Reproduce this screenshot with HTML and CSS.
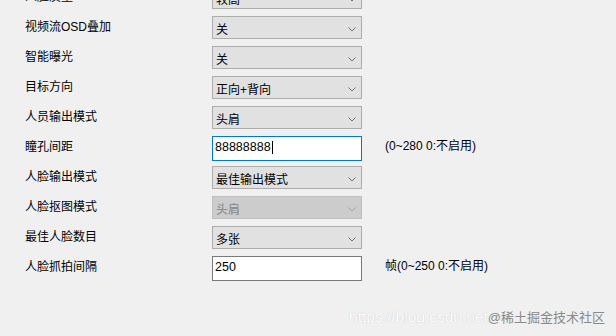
FILE: index.html
```html
<!DOCTYPE html>
<html lang="zh-CN">
<head>
  <meta charset="UTF-8">
  <title>人脸参数设置</title>
  <link rel="stylesheet" href="styles.css">
</head>
<body>

  <!-- Parameter form -->
  <div class="form">
    <div class="row">
      <span class="label">人脸质量</span>
      <div class="select"><span>较高</span><svg class="arrow" width="8" height="5" viewBox="0 0 8 5"><path d="M0.5 0.5 L4 4 L7.5 0.5" /></svg></div>
    </div>
    <div class="row">
      <span class="label">视频流OSD叠加</span>
      <div class="select"><span>关</span><svg class="arrow" width="8" height="5" viewBox="0 0 8 5"><path d="M0.5 0.5 L4 4 L7.5 0.5" /></svg></div>
    </div>
    <div class="row">
      <span class="label">智能曝光</span>
      <div class="select"><span>关</span><svg class="arrow" width="8" height="5" viewBox="0 0 8 5"><path d="M0.5 0.5 L4 4 L7.5 0.5" /></svg></div>
    </div>
    <div class="row">
      <span class="label">目标方向</span>
      <div class="select"><span>正向+背向</span><svg class="arrow" width="8" height="5" viewBox="0 0 8 5"><path d="M0.5 0.5 L4 4 L7.5 0.5" /></svg></div>
    </div>
    <div class="row">
      <span class="label">人员输出模式</span>
      <div class="select"><span>头肩</span><svg class="arrow" width="8" height="5" viewBox="0 0 8 5"><path d="M0.5 0.5 L4 4 L7.5 0.5" /></svg></div>
    </div>
    <div class="row">
      <span class="label">瞳孔间距</span>
      <div class="input focus"><span>88888888</span><i class="caret"></i></div>
      <span class="hint">(0~280 0:不启用)</span>
    </div>
    <div class="row">
      <span class="label">人脸输出模式</span>
      <div class="select"><span>最佳输出模式</span><svg class="arrow" width="8" height="5" viewBox="0 0 8 5"><path d="M0.5 0.5 L4 4 L7.5 0.5" /></svg></div>
    </div>
    <div class="row">
      <span class="label">人脸抠图模式</span>
      <div class="select disabled"><span>头肩</span><svg class="arrow" width="8" height="5" viewBox="0 0 8 5"><path d="M0.5 0.5 L4 4 L7.5 0.5" /></svg></div>
    </div>
    <div class="row">
      <span class="label">最佳人脸数目</span>
      <div class="select"><span>多张</span><svg class="arrow" width="8" height="5" viewBox="0 0 8 5"><path d="M0.5 0.5 L4 4 L7.5 0.5" /></svg></div>
    </div>
    <div class="row">
      <span class="label">人脸抓拍间隔</span>
      <div class="input"><span>250</span></div>
      <span class="hint">帧(0~250 0:不启用)</span>
    </div>
  </div>

  <!-- Watermark -->
  <div class="watermark"><span class="url">https://blog.csdn.net</span><span class="site">@稀土掘金技术社区</span></div>

</body>
</html>
```

FILE: styles.css
```css
/* General Reset */
* {
  margin: 0;
  padding: 0;
  box-sizing: border-box;
}

body {
  font-family: "Liberation Sans", "Noto Sans CJK SC", sans-serif;
  font-size: 12px;
  line-height: 16px;
  color: #000000;
  background-color: #f0f0f0;
  width: 616px;
  height: 336px;
  overflow: hidden;
  position: relative;
}

.form {
  margin-top: -14px;
  padding-left: 25px;
}

.row {
  display: flex;
  align-items: flex-start;
  height: 30px;
}

.label {
  width: 187px;
  padding-top: 3px;
}

/* Combo boxes */
.select {
  display: flex;
  justify-content: space-between;
  width: 150px;
  height: 23px;
  padding: 5px 0 0 3px;
  border: 1px solid #adadad;
  background-color: #e1e1e1;
}

.arrow {
  margin: 5px 5px 0 0;
  fill: none;
  stroke: #707070;
  stroke-width: 1;
}

.select.disabled {
  border-color: #bfbfbf;
  background-color: #cccccc;
  color: #838383;
}

.select.disabled .arrow {
  stroke: #a6a6a6;
}

/* Text boxes */
.input {
  display: flex;
  align-items: flex-start;
  width: 150px;
  height: 25px;
  padding: 2px 0 0 2px;
  border: 1px solid #7a7a7a;
  background-color: #ffffff;
  font-size: 12.5px;
}

.input.focus {
  border-color: #0078d7;
}

.caret {
  display: block;
  width: 1px;
  height: 13px;
  margin: 2px 0 0 1px;
  background-color: #000000;
}

.hint {
  margin-left: 23px;
  padding-top: 2px;
}

/* Watermark over the corner */
.watermark {
  position: absolute;
  right: 11px;
  bottom: 9px;
  line-height: 18px;
}

.url {
  font-size: 15.5px;
  color: #ffffff;
  text-shadow: 0 0 1px #b8b8b8;
}

.site {
  font-size: 13px;
  color: #8a8a8a;
}
```
